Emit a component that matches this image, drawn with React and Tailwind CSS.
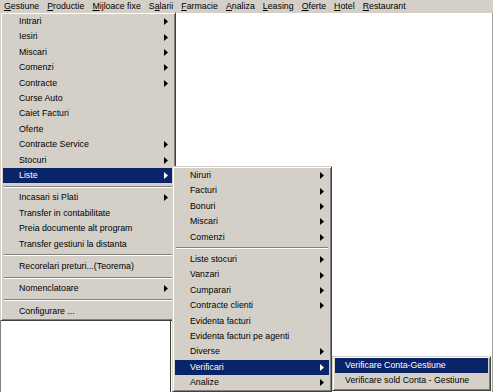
const font = { fontFamily: '"Liberation Sans", Arial, sans-serif' };

const topMenu = [
  ["G", "estiune"],
  ["P", "roductie"],
  ["M", "ijloace fixe"],
  ["S", "alarii", 1],
  ["F", "armacie"],
  ["A", "naliza"],
  ["L", "easing"],
  ["O", "ferte"],
  ["H", "otel"],
  ["R", "estaurant"],
];

const gestiune = [
  { t: "Intrari", sub: true },
  { t: "Iesiri", sub: true },
  { t: "Miscari", sub: true },
  { t: "Comenzi", sub: true },
  { t: "Contracte", sub: true },
  { t: "Curse Auto" },
  { t: "Caiet Facturi" },
  { t: "Oferte" },
  { t: "Contracte Service", sub: true },
  { t: "Stocuri", sub: true },
  { t: "Liste", sub: true, active: true },
  "sep",
  { t: "Incasari si Plati", sub: true },
  { t: "Transfer in contabilitate" },
  { t: "Preia documente alt program" },
  { t: "Transfer gestiuni la distanta" },
  "sep",
  { t: "Recorelari preturi...(Teorema)" },
  "sep",
  { t: "Nomenclatoare", sub: true },
  "sep",
  { t: "Configurare ..." },
];

const liste = [
  { t: "Niruri", sub: true },
  { t: "Facturi", sub: true },
  { t: "Bonuri", sub: true },
  { t: "Miscari", sub: true },
  { t: "Comenzi", sub: true },
  "sep",
  { t: "Liste stocuri", sub: true },
  { t: "Vanzari", sub: true },
  { t: "Cumparari", sub: true },
  { t: "Contracte clienti", sub: true },
  { t: "Evidenta facturi" },
  { t: "Evidenta facturi pe agenti" },
  { t: "Diverse", sub: true },
  { t: "Verificari", sub: true, active: true },
  { t: "Analize", sub: true },
];

const verificari = [
  { t: "Verificare Conta-Gestiune", active: true },
  { t: "Verificare sold Conta - Gestiune" },
];

function Arrow({ white }) {
  return (
    <svg width="4" height="7" viewBox="0 0 4 7" className="shrink-0">
      <path d="M0 0 L4 3.5 L0 7 Z" fill={white ? "#ffffff" : "#000000"} />
    </svg>
  );
}

function Menu({ items, className, pl = "pl-[16px]" }) {
  return (
    <div
      className={`absolute bg-[#d4d0c8] border border-t-[#d4d0c8] border-l-[#d4d0c8] border-r-[#404040] border-b-[#404040] shadow-[inset_1px_1px_0_#ffffff,inset_-1px_-1px_0_#808080] py-[1px] px-[2px] ${className}`}
    >
      {items.map((it, i) =>
        it === "sep" ? (
          <div key={i} className="h-[7px] flex flex-col justify-center px-[1px]">
            <div className="h-[1px] bg-[#808080]" />
            <div className="h-[1px] bg-white" />
          </div>
        ) : (
          <div
            key={i}
            className={`h-[15.4px] flex items-center justify-between ${pl} pr-[5px] whitespace-nowrap ${
              it.active ? "bg-[#0a246a] text-white" : "text-black"
            }`}
          >
            <span>{it.t}</span>
            {it.sub && <Arrow white={it.active} />}
          </div>
        )
      )}
    </div>
  );
}

export default function App() {
  return (
    <div className="relative w-[493px] h-[392px] overflow-hidden bg-white text-[8.8px]" style={font}>
      <div className="h-[13px] bg-[#d4d0c8] flex items-center">
        {topMenu.map(([a, b, u], i) => (
          <div key={i} className="px-[4px] leading-[13px] text-black whitespace-nowrap">
            {u ? (
              <>
                {a}
                <span className="underline">{b[0]}</span>
                {b.slice(1)}
              </>
            ) : (
              <>
                <span className="underline">{a}</span>
                {b}
              </>
            )}
          </div>
        ))}
      </div>
      <div className="absolute top-[13px] right-0 bottom-0 w-[1px] bg-[#a0a0a0]" />

      {/* window behind the menus */}
      <div className="absolute left-0 top-[300px] w-[171px] h-[92px] bg-white border-l border-l-[#808080] border-r border-r-[#404040]" />

      <Menu items={gestiune} className="left-0 top-[12px] w-[176px]" />
      <Menu items={liste} className="left-[172px] top-[166px] w-[160px]" pl="pl-[15px]" />
      <Menu items={verificari} className="left-[332px] top-[356px] w-[159px]" pl="pl-[10px]" />
    </div>
  );
}
